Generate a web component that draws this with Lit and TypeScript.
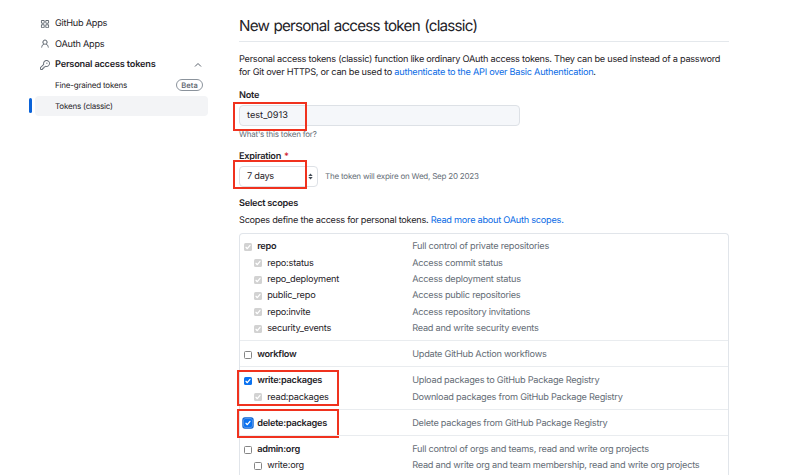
import { LitElement, html, css, svg } from "lit";
import { customElement, property } from "lit/decorators.js";

type CheckState = "off" | "on" | "disabled" | "focused";

interface Scope {
  name: string;
  text: string;
  state: CheckState;
}

const GROUPS: Scope[][] = [
  [
    { name: "repo", text: "Full control of private repositories", state: "disabled" },
    { name: "repo:status", text: "Access commit status", state: "disabled" },
    { name: "repo_deployment", text: "Access deployment status", state: "disabled" },
    { name: "public_repo", text: "Access public repositories", state: "disabled" },
    { name: "repo:invite", text: "Access repository invitations", state: "disabled" },
    { name: "security_events", text: "Read and write security events", state: "disabled" },
  ],
  [{ name: "workflow", text: "Update GitHub Action workflows", state: "off" }],
  [
    { name: "write:packages", text: "Upload packages to GitHub Package Registry", state: "on" },
    { name: "read:packages", text: "Download packages from GitHub Package Registry", state: "disabled" },
  ],
  [{ name: "delete:packages", text: "Delete packages from GitHub Package Registry", state: "focused" }],
  [
    { name: "admin:org", text: "Full control of orgs and teams, read and write org projects", state: "off" },
    { name: "write:org", text: "Read and write org and team membership, read and write org projects", state: "off" },
  ],
];

const ICONS = {
  apps: svg`<path d="M1.5 3.25c0-.966.784-1.75 1.75-1.75h2.5c.966 0 1.75.784 1.75 1.75v2.5A1.75 1.75 0 0 1 5.75 7.5h-2.5A1.75 1.75 0 0 1 1.5 5.75Zm7 0c0-.966.784-1.75 1.75-1.75h2.5c.966 0 1.75.784 1.75 1.75v2.5a1.75 1.75 0 0 1-1.75 1.75h-2.5A1.75 1.75 0 0 1 8.5 5.75Zm-7 7c0-.966.784-1.75 1.75-1.75h2.5c.966 0 1.75.784 1.75 1.75v2.5a1.75 1.75 0 0 1-1.75 1.75h-2.5a1.75 1.75 0 0 1-1.75-1.75Zm7 0c0-.966.784-1.75 1.75-1.75h2.5c.966 0 1.75.784 1.75 1.75v2.5a1.75 1.75 0 0 1-1.75 1.75h-2.5a1.75 1.75 0 0 1-1.75-1.75ZM3.25 3a.25.25 0 0 0-.25.25v2.5c0 .138.112.25.25.25h2.5A.25.25 0 0 0 6 5.75v-2.5A.25.25 0 0 0 5.75 3Zm7 0a.25.25 0 0 0-.25.25v2.5c0 .138.112.25.25.25h2.5a.25.25 0 0 0 .25-.25v-2.5a.25.25 0 0 0-.25-.25Zm-7 7a.25.25 0 0 0-.25.25v2.5c0 .138.112.25.25.25h2.5a.25.25 0 0 0 .25-.25v-2.5a.25.25 0 0 0-.25-.25Zm7 0a.25.25 0 0 0-.25.25v2.5c0 .138.112.25.25.25h2.5a.25.25 0 0 0 .25-.25v-2.5a.25.25 0 0 0-.25-.25Z"/>`,
  person: svg`<path d="M10.561 8.073a6.005 6.005 0 0 1 3.432 5.142.75.75 0 1 1-1.498.07 4.5 4.5 0 0 0-8.99 0 .75.75 0 0 1-1.498-.07 6.004 6.004 0 0 1 3.431-5.142 3.999 3.999 0 1 1 5.123 0ZM10.5 5a2.5 2.5 0 1 0-5 0 2.5 2.5 0 0 0 5 0Z"/>`,
  key: svg`<path d="M10.5 0a5.499 5.499 0 1 1-1.288 10.848l-.932.932a.749.749 0 0 1-.53.22H7v.75a.749.749 0 0 1-.22.53l-.5.5a.749.749 0 0 1-.53.22H5v.75a.749.749 0 0 1-.22.53l-.5.5a.749.749 0 0 1-.53.22h-2A1.75 1.75 0 0 1 0 14.25v-2c0-.199.079-.389.22-.53l4.932-4.932A5.5 5.5 0 0 1 10.5 0Zm-4 5.5c-.001.431.069.86.205 1.269a.75.75 0 0 1-.181.768L1.5 12.56v1.69c0 .138.112.25.25.25h1.69l.06-.06v-1.19a.75.75 0 0 1 .75-.75h1.19l.06-.06v-1.19a.75.75 0 0 1 .75-.75h1.19l1.023-1.025a.75.75 0 0 1 .768-.18A4 4 0 1 0 6.5 5.5ZM11 6a1 1 0 1 1 0-2 1 1 0 0 1 0 2Z"/>`,
};

@customElement("scope-check")
class ScopeCheck extends LitElement {
  @property() state: CheckState = "off";

  static styles = css`
    :host { display: block; width: 8px; height: 8px; }
    .box { box-sizing: border-box; width: 8px; height: 8px; border-radius: 1.5px; display: block; }
    .off { border: 1px solid #858585; background: #fff; }
    .on { background: #0b72f0; }
    .disabled { background: #d2d2d2; }
    .focused { background: #0b72f0; border-radius: 1px; box-shadow: 0 0 0 .5px #8dbcf5, 0 0 0 1.7px #0b63d4; }
    path { fill: none; stroke: #fff; stroke-width: 1.25; stroke-linecap: round; stroke-linejoin: round; }
  `;

  render() {
    return html`<svg class="box ${this.state}" viewBox="0 0 8 8">
      ${this.state === "off" ? null : svg`<path d="M2 4.3 3.3 5.7 6 2.3"/>`}
    </svg>`;
  }
}

@customElement("app-root")
class AppRoot extends LitElement {
  static styles = css`
    :host {
      display: grid;
      grid-template-columns: 239px 490px;
      height: 475px;
      overflow: hidden;
      background: #fff;
      color: #1f2328;
      font-family: Inter, "Liberation Sans", sans-serif;
      font-size: 9.2px;
      letter-spacing: -.26px;
      line-height: 13.5px;
      text-rendering: geometricPrecision;
    }
    * { box-sizing: border-box; }
    nav { padding: 13.8px 31px 0 29px; }
    .item { height: 20.4px; line-height: 15px; display: flex; align-items: center; padding: 0 5px 0 10.5px; }
    .item > svg { width: 10px; height: 10px; margin-right: 5.5px; fill: #656d76; flex: none; }
    .item.bold { font-weight: 600; letter-spacing: -.2px; }
    .item > .chev { width: 8px; height: 8px; margin: 0 1px 0 auto; fill: none; stroke: #59616b; stroke-width: 1; }
    .sub { font-size: 8px; padding-left: 26px; letter-spacing: -.2px; }
    .beta { margin-left: auto; height: 12px; line-height: 11px; border: 1px solid #8b939c; border-radius: 6px; padding: 0 4.3px; font-size: 7.6px; font-weight: 500; color: #59616b; letter-spacing: 0; }
    .current { padding-left: 0; padding-right: 0; }
    .bar { width: 3px; height: 15px; border-radius: 2px; background: #0b63d8; margin-right: 3px; }
    .pill { flex: 1; height: 20px; line-height: 20px; border-radius: 4px; background: #f3f4f6; padding-left: 20px; }
    main { padding-top: 14px; display: flex; flex-direction: column; }
    h1 { margin: 0; height: 28px; line-height: 23px; font-size: 15.2px; letter-spacing: -.78px; word-spacing: .8px; font-weight: 400; border-bottom: 1px solid #e4e8ec; white-space: nowrap; }
    p { margin: 0; white-space: nowrap; }
    .intro { margin-top: 10.6px; height: 26.4px; }
    a { color: #0b6ce6; text-decoration: none; }
    .label { font-weight: 600; height: 14px; line-height: 15.4px; }
    .note { margin-top: 9px; }
    .req { color: #d1242f; margin-left: 1px; }
    .field { position: relative; display: flex; align-items: center; }
    .input { width: 281px; height: 21px; line-height: 20px; margin-top: 3px; border: 1px solid #dde1e6; border-radius: 4px; background: #f5f7fa; padding-left: 7px; letter-spacing: 0; }
    .hint { font-size: 8px; color: #656d76; letter-spacing: -.21px; }
    .under { height: 12px; line-height: 12px; margin-top: 2px; }
    .expiration { margin-top: 9px; }
    .row { margin-top: 3px; height: 22px; }
    .select { width: 78.5px; height: 21px; line-height: 16px; display: flex; align-items: center; justify-content: space-between; border: 1px solid #dde1e6; border-radius: 4px; padding: 0 4px 0 7px; }
    .select svg { width: 5px; height: 7px; fill: #444c56; }
    .row .hint { margin-left: 7.5px; }
    .mark { position: absolute; border: 2px solid #f0321e; pointer-events: none; }
    .m1 { left: -6px; top: 0; width: 74px; height: 29px; }
    .m2 { left: -6px; top: -6px; width: 74px; height: 29px; }
    .m3 { left: -3px; top: 3px; width: 102px; height: 36px; }
    .m4 { left: -3px; top: -1px; width: 102px; height: 29px; }
    .scopes-title { margin-top: 8px; }
    .scopes-text { margin-top: 3px; height: 14px; line-height: 15.4px; }
    .list { margin-top: 6px; border: 1px solid #e1e5ea; border-radius: 4px 4px 0 0; border-bottom: 0; flex: none; height: 260px; }
    .group { position: relative; padding: 4.4px 0 3.8px 4.2px; }
    .group + .group { border-top: 1px solid #e9ecef; padding: 4.85px 0 4px 4.2px; }
    .scope { height: 16.35px; line-height: 14.35px; display: grid; grid-template-columns: 168px 1fr; align-items: center; white-space: nowrap; }
    .name { display: flex; align-items: center; gap: 5px; }
    .name scope-check { position: relative; top: .5px; }
    .name span, .desc { padding-top: 2px; }
    .scope:first-child .name { font-weight: 600; }
    .child .name { padding-left: 10px; letter-spacing: -.22px; }
    .desc { color: #656d76; letter-spacing: -.25px; }
  `;

  private group(scopes: Scope[]) {
    const mark = scopes[0].name === "write:packages" ? "m3" : scopes[0].name === "delete:packages" ? "m4" : "";
    return html`<div class="group">
      ${scopes.map((s, i) => html`<div class="scope ${i ? "child" : ""}">
        <div class="name"><scope-check .state=${s.state}></scope-check><span>${s.name}</span></div>
        <span class="desc">${s.text}</span>
      </div>`)}
      ${mark ? html`<div class="mark ${mark}"></div>` : null}
    </div>`;
  }

  render() {
    return html`
      <nav>
        <div class="item"><svg viewBox="0 0 16 16">${ICONS.apps}</svg>GitHub Apps</div>
        <div class="item"><svg viewBox="0 0 16 16">${ICONS.person}</svg>OAuth Apps</div>
        <div class="item bold"><svg viewBox="0 0 16 16">${ICONS.key}</svg>Personal access tokens
          <svg class="chev" viewBox="0 0 8 8"><path d="M1 5.5 4 2.5 7 5.5"/></svg></div>
        <div class="item sub">Fine-grained tokens<span class="beta">Beta</span></div>
        <div class="item sub current"><span class="bar"></span><span class="pill">Tokens (classic)</span></div>
      </nav>
      <main>
        <h1>New personal access token (classic)</h1>
        <p class="intro">Personal access tokens (classic) function like ordinary OAuth access tokens. They can be used instead of a password<br>for Git over HTTPS, or can be used to <a>authenticate to the API over Basic Authentication</a>.</p>
        <div class="label note">Note</div>
        <div class="field"><div class="input">test_0913</div><div class="mark m1"></div></div>
        <div class="hint under">What's this token for?</div>
        <div class="label expiration">Expiration <span class="req">*</span></div>
        <div class="field row">
          <div class="select">7 days<svg viewBox="0 0 5 8"><path d="M0 3.3 2.5.5 5 3.3ZM0 4.7 2.5 7.5 5 4.7Z"/></svg></div>
          <span class="hint">The token will expire on Wed, Sep 20 2023</span>
          <div class="mark m2"></div>
        </div>
        <div class="label scopes-title">Select scopes</div>
        <p class="scopes-text">Scopes define the access for personal tokens. <a>Read more about OAuth scopes.</a></p>
        <div class="list">${GROUPS.map((g) => this.group(g))}</div>
      </main>`;
  }
}
